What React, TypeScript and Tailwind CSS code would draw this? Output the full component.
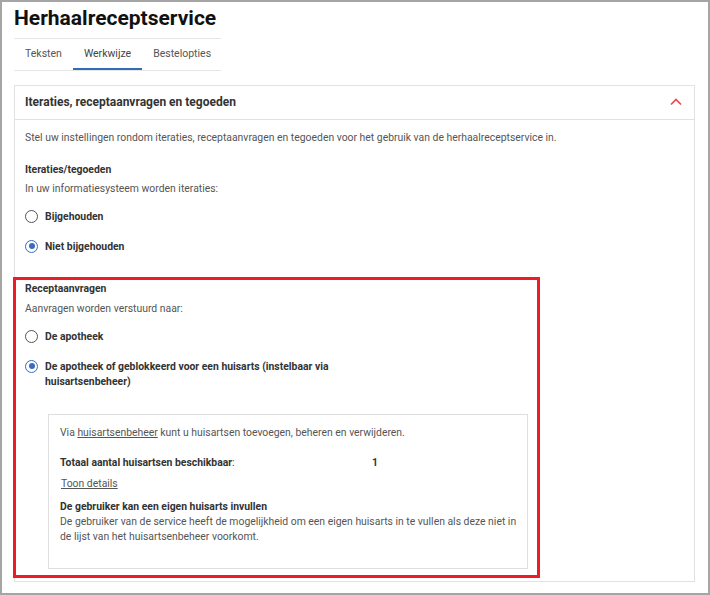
import React from "react";

function Radio({ checked }: { checked?: boolean }) {
  return (
    <span
      className={
        "mt-[1px] flex h-[13px] w-[13px] shrink-0 items-center justify-center rounded-full border-[1.5px] " +
        (checked ? "border-[#3a6cc0]" : "border-[#555]")
      }
    >
      {checked && <span className="h-[6px] w-[6px] rounded-full bg-[#3a6cc0]" />}
    </span>
  );
}

function Option({ checked, children }: { checked?: boolean; children: React.ReactNode }) {
  return (
    <div className="flex items-start gap-[7px]">
      <Radio checked={checked} />
      <div className="font-bold leading-[15px] text-[#333]">{children}</div>
    </div>
  );
}

export default function App() {
  return (
    <div
      className="h-[595px] w-[710px] overflow-hidden border-2 border-[#a5a5a5] bg-white text-[10.4px] text-[#555]"
      style={{ fontFamily: "Roboto, 'Liberation Sans', sans-serif" }}
    >
      <div className="pl-[12px] pr-[12px] pt-[3px]">
        <h1 className="text-[21px] font-bold leading-[26px] text-[#111]">Herhaalreceptservice</h1>
        <div className="mt-[7px] w-[207px] border-t border-[#e6e6e6]">
          <div className="flex border-b border-[#e6e6e6] text-[10.5px] text-[#555]">
            <div className="px-[11px] pb-[8px] pt-[7px]">Teksten</div>
            <div className="border-b-[2px] border-[#2f6db5] px-[11px] pb-[6px] pt-[7px] text-[#444]">Werkwijze</div>
            <div className="px-[11px] pb-[8px] pt-[7px]">Bestelopties</div>
          </div>
        </div>

        <div className="mt-[14px] mr-[1px] border border-[#e2e2e2]">
          <div className="flex items-center justify-between border-b border-[#e2e2e2] px-[10px] py-[8px]">
            <div className="text-[12px] font-bold leading-[17px] text-[#333]">
              Iteraties, receptaanvragen en tegoeden
            </div>
            <svg width="12" height="8" viewBox="0 0 12 8" className="mr-[2px]">
              <path d="M1 6.5 L6 1.5 L11 6.5" fill="none" stroke="#f04545" strokeWidth="1.6" />
            </svg>
          </div>

          <div className="px-[10px] pt-[10px]">
            <p className="whitespace-nowrap leading-[15px]">
              Stel uw instellingen rondom iteraties, receptaanvragen en tegoeden voor het gebruik van de
              herhaalreceptservice in.
            </p>

            <div className="mt-[17px] font-bold leading-[15px] text-[#333]">Iteraties/tegoeden</div>
            <div className="mt-[4px] leading-[15px]">In uw informatiesysteem worden iteraties:</div>
            <div className="mt-[13px] flex flex-col gap-[15px]">
              <Option>Bijgehouden</Option>
              <Option checked>Niet bijgehouden</Option>
            </div>
          </div>

          <div className="ml-[-2px] mt-[23px] w-[527px] border-[3px] border-[#ee1c25] pb-[6px] pl-[9px] pt-[1px]">
            <div className="font-bold leading-[15px] text-[#333]">Receptaanvragen</div>
            <div className="mt-[5px] leading-[15px]">Aanvragen worden verstuurd naar:</div>
            <div className="mt-[13px] flex flex-col gap-[15px]">
              <Option>De apotheek</Option>
              <Option checked>
                De apotheek of geblokkeerd voor een huisarts (instelbaar via
                <br />
                huisartsenbeheer)
              </Option>
            </div>

            <div className="ml-[23px] mt-[25px] w-[480px] border border-[#dedede] px-[11px] pb-[24px] pt-[10px]">
              <div className="leading-[15px]">
                Via <span className="underline">huisartsenbeheer</span> kunt u huisartsen toevoegen, beheren en
                verwijderen.
              </div>
              <div className="mt-[15px] flex leading-[15px]">
                <span className="w-[312px] font-bold text-[#333]">
                  Totaal aantal huisartsen beschikbaar<span className="font-normal">:</span>
                </span>
                <span className="font-bold text-[#333]">1</span>
              </div>
              <div className="mt-[6px] pl-[1px] leading-[15px] underline">Toon details</div>
              <div className="mt-[8px] font-bold leading-[15px] text-[#333]">
                De gebruiker kan een eigen huisarts invullen
              </div>
              <div className="whitespace-nowrap leading-[15px]">
                De gebruiker van de service heeft de mogelijkheid om een eigen huisarts in te vullen als deze niet in
                <br />
                de lijst van het huisartsenbeheer voorkomt.
              </div>
            </div>
          </div>
          <div className="h-[3px]" />
        </div>
      </div>
    </div>
  );
}
